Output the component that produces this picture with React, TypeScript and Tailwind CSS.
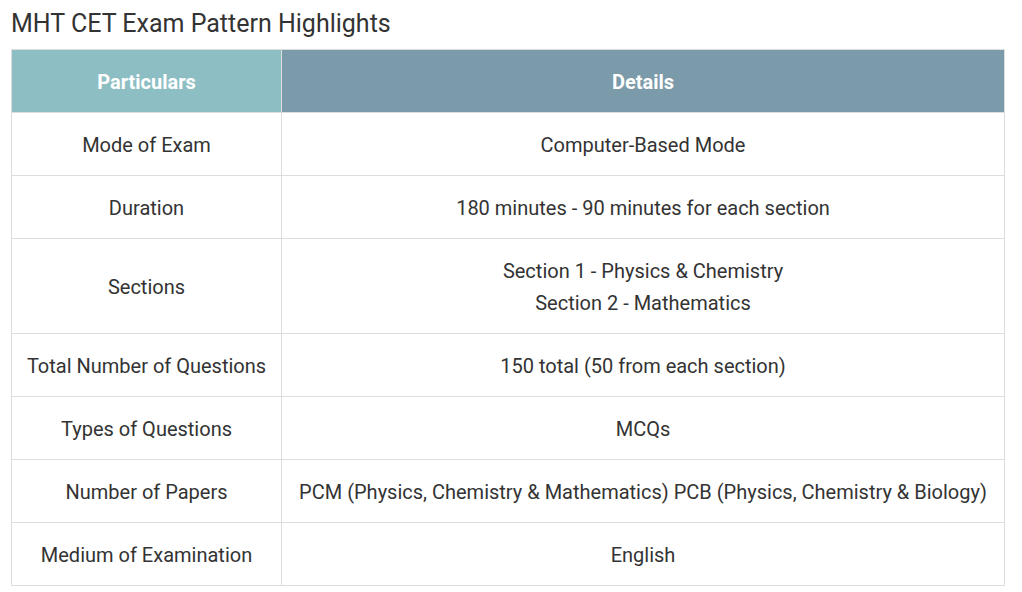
import React from "react";

const rows: { label: string; details: string[] }[] = [
  { label: "Mode of Exam", details: ["Computer-Based Mode"] },
  { label: "Duration", details: ["180 minutes - 90 minutes for each section"] },
  { label: "Sections", details: ["Section 1 - Physics & Chemistry", "Section 2 - Mathematics"] },
  { label: "Total Number of Questions", details: ["150 total (50 from each section)"] },
  { label: "Types of Questions", details: ["MCQs"] },
  {
    label: "Number of Papers",
    details: ["PCM (Physics, Chemistry & Mathematics) PCB (Physics, Chemistry & Biology)"],
  },
  { label: "Medium of Examination", details: ["English"] },
];

const App = () => {
  return (
    <div className="bg-white px-[11px] pt-[8px] font-['Roboto',sans-serif] text-[#333]">
      <h2 className="mb-[9px] text-[25px] leading-[32px] font-normal text-[#333]">
        MHT CET Exam Pattern Highlights
      </h2>
      <table className="w-[994px] border-collapse text-[20px] leading-[32px]">
        <thead>
          <tr>
            <th className="w-[270px] border border-[#ddd] bg-[#8dbec4] pt-[16px] pb-[14px] text-center font-bold text-white">
              Particulars
            </th>
            <th className="border border-[#ddd] bg-[#7b9aaa] pt-[16px] pb-[14px] text-center font-bold text-white">
              Details
            </th>
          </tr>
        </thead>
        <tbody>
          {rows.map((row) => (
            <tr key={row.label}>
              <td className="border border-[#ddd] px-2 pt-[16px] pb-[14px] text-center">{row.label}</td>
              <td className="border border-[#ddd] px-2 pt-[16px] pb-[14px] text-center">
                {row.details.map((line) => (
                  <div key={line}>{line}</div>
                ))}
              </td>
            </tr>
          ))}
        </tbody>
      </table>
    </div>
  );
};

export default App;
